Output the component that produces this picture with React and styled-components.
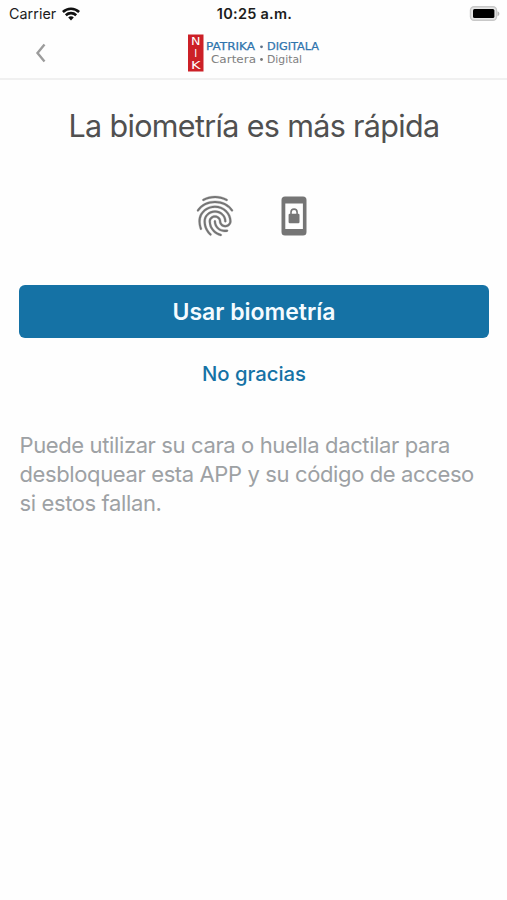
import styled, { createGlobalStyle } from "styled-components";
import { MdFingerprint } from "react-icons/md";

const GlobalStyle = createGlobalStyle`
    * {
        box-sizing: border-box;
    }

    body {
        margin: 0;
        background: #fefefe;
        font-family: Inter, "Liberation Sans", sans-serif;
    }
`;

const StyledScreen = styled.div`
    display: flex;
    flex-direction: column;
    min-height: 900px;
    background: #fefefe;
`;

const StyledStatusBar = styled.div`
    display: grid;
    grid-template-columns: 1fr auto 1fr;
    align-items: center;
    height: 27px;
    padding: 0 7px 0 9px;
    color: #1c1c1c;
`;

const StyledCarrier = styled.div`
    display: flex;
    align-items: center;
    gap: 6px;
    font-size: 14.3px;
    letter-spacing: 0.05px;
`;

const StyledClock = styled.div`
    font-size: 14.5px;
    font-weight: 600;
    letter-spacing: 0.25px;
`;

const StyledBattery = styled.svg`
    justify-self: end;
`;

const StyledHeader = styled.header`
    display: grid;
    grid-template-columns: 1fr auto 1fr;
    align-items: center;
    height: 53px;
    padding: 0 34px;
    border-bottom: 2px solid #f0f0f0;
`;

const StyledBackButton = styled.button`
    display: flex;
    justify-self: start;
    padding: 0;
    border: 0;
    background: none;
`;

const StyledContent = styled.main`
    display: flex;
    flex-direction: column;
    padding: 26px 18px 0 19px;
`;

const StyledTitle = styled.h1`
    margin: 0;
    font-size: 30.5px;
    font-weight: 400;
    line-height: 40px;
    letter-spacing: -0.66px;
    text-align: center;
    white-space: nowrap;
    color: #505050;
`;

const StyledIcons = styled.div`
    display: flex;
    align-items: center;
    justify-content: center;
    gap: 42px;
    margin-top: 46px;
    padding-right: 11px;
    height: 48px;
    color: #757575;
`;

const StyledFingerprint = styled(MdFingerprint)`
    path:last-child {
        stroke: currentColor;
        stroke-width: 0.15px;
    }

    path:first-child {
        stroke: none;
    }
`;

const StyledPrimaryButton = styled.button`
    height: 53px;
    margin-top: 45px;
    padding: 0;
    border: 0;
    border-radius: 6px;
    background: #1572a5;
    color: #f4fbff;
    font-family: inherit;
    font-size: 23px;
    font-weight: 600;
`;

const StyledLinkButton = styled.button`
    align-self: center;
    height: 30px;
    margin-top: 20px;
    padding: 0;
    border: 0;
    background: none;
    color: #1572a5;
    font-family: inherit;
    font-size: 20.3px;
    font-weight: 500;
`;

const StyledHint = styled.p`
    margin: 42.5px 0 0 0.5px;
    font-size: 22px;
    line-height: 29.3px;
    letter-spacing: -0.38px;
    white-space: nowrap;
    color: #9da1a4;
`;

function WifiIcon() {
    return (
        <svg width="18" height="14" viewBox="0 0 18 14" fill="none" stroke="#111" strokeWidth="2.6">
            <path d="M0.9 5C5.5 0.7 12.5 0.7 17.1 5" />
            <path d="M3.8 8.2C6.8 5.4 11.2 5.4 14.2 8.2" />
            <path d="M6.2 10.5C7.8 8.9 10.2 8.9 11.8 10.5L9 13.4Z" fill="#111" stroke="none" />
        </svg>
    );
}

function BatteryIcon() {
    return (
        <StyledBattery width="32" height="16" viewBox="0 0 32 16">
            <rect x="2.5" y="0.8" width="26" height="13.4" rx="3.5" fill="#e6e6e6" stroke="#c8c8c8" strokeWidth="1.4" />
            <rect x="5" y="3" width="21.4" height="9" rx="1.5" fill="#000" />
            <path d="M29.5 5.2C32 6.2 32 9.2 29.5 10.2Z" fill="#b5b5b5" />
        </StyledBattery>
    );
}

function Logo() {
    return (
        <svg width="133" height="38" viewBox="0 0 133 38" fontFamily='"DejaVu Sans", sans-serif'>
            <rect x="1" y="0.5" width="15.5" height="37" fill="#cc2027" />
            <g fill="#fff" fontSize="10">
                <text x="4" y="10.5" textLength="9.5" lengthAdjust="spacingAndGlyphs">N</text>
                <text x="7.2" y="22.5">I</text>
                <text x="4" y="35" textLength="9.5" lengthAdjust="spacingAndGlyphs">K</text>
            </g>
            <g fill="#2f74ad" stroke="#2f74ad" strokeWidth="0.25" fontSize="10.6">
                <text x="19" y="16" textLength="49" lengthAdjust="spacingAndGlyphs">PATRIKA</text>
                <text x="80" y="16" textLength="52" lengthAdjust="spacingAndGlyphs">DIGITALA</text>
            </g>
            <g fill="#808080" fontSize="10.8">
                <text x="24" y="28.5" textLength="45" lengthAdjust="spacingAndGlyphs">Cartera</text>
                <text x="80" y="28.5" textLength="35" lengthAdjust="spacingAndGlyphs">Digital</text>
            </g>
            <circle cx="74.5" cy="12.8" r="1.4" fill="#5c7086" />
            <circle cx="74.5" cy="25.5" r="1.4" fill="#777" />
        </svg>
    );
}

function PhoneLockIcon() {
    return (
        <svg width="26" height="40" viewBox="0 0 26 40">
            <path
                fill="currentColor"
                fillRule="evenodd"
                d="M4 0.5H22Q25.5 0.5 25.5 4V36Q25.5 39.5 22 39.5H4Q0.5 39.5 0.5 36V4Q0.5 0.5 4 0.5ZM4.3 7.5V33H21.9V7.5Z"
            />
            <rect x="7.6" y="17.8" width="10.9" height="9.4" rx="1.2" fill="currentColor" />
            <path d="M10 18.5V16.2A3.05 3.05 0 0 1 16.1 16.2V18.5" fill="none" stroke="currentColor" strokeWidth="1.6" />
        </svg>
    );
}

function App() {
    return (
        <>
            <GlobalStyle />
            <StyledScreen>
                <StyledStatusBar>
                    <StyledCarrier>
                        Carrier
                        <WifiIcon />
                    </StyledCarrier>
                    <StyledClock>10:25 a.m.</StyledClock>
                    <BatteryIcon />
                </StyledStatusBar>
                <StyledHeader>
                    <StyledBackButton aria-label="Volver">
                        <svg width="12" height="20" viewBox="0 0 12 20" fill="none" stroke="#9c9c9c" strokeWidth="2.4">
                            <path d="M10.5 1.5L3.5 10L10.5 18.5" />
                        </svg>
                    </StyledBackButton>
                    <Logo />
                </StyledHeader>
                <StyledContent>
                    <StyledTitle>La biometría es más rápida</StyledTitle>
                    <StyledIcons>
                        <StyledFingerprint size={48} />
                        <PhoneLockIcon />
                    </StyledIcons>
                    <StyledPrimaryButton>Usar biometría</StyledPrimaryButton>
                    <StyledLinkButton>No gracias</StyledLinkButton>
                    <StyledHint>
                        Puede utilizar su cara o huella dactilar para
                        <br />
                        desbloquear esta APP y su código de acceso
                        <br />
                        si estos fallan.
                    </StyledHint>
                </StyledContent>
            </StyledScreen>
        </>
    );
}

export default App;
